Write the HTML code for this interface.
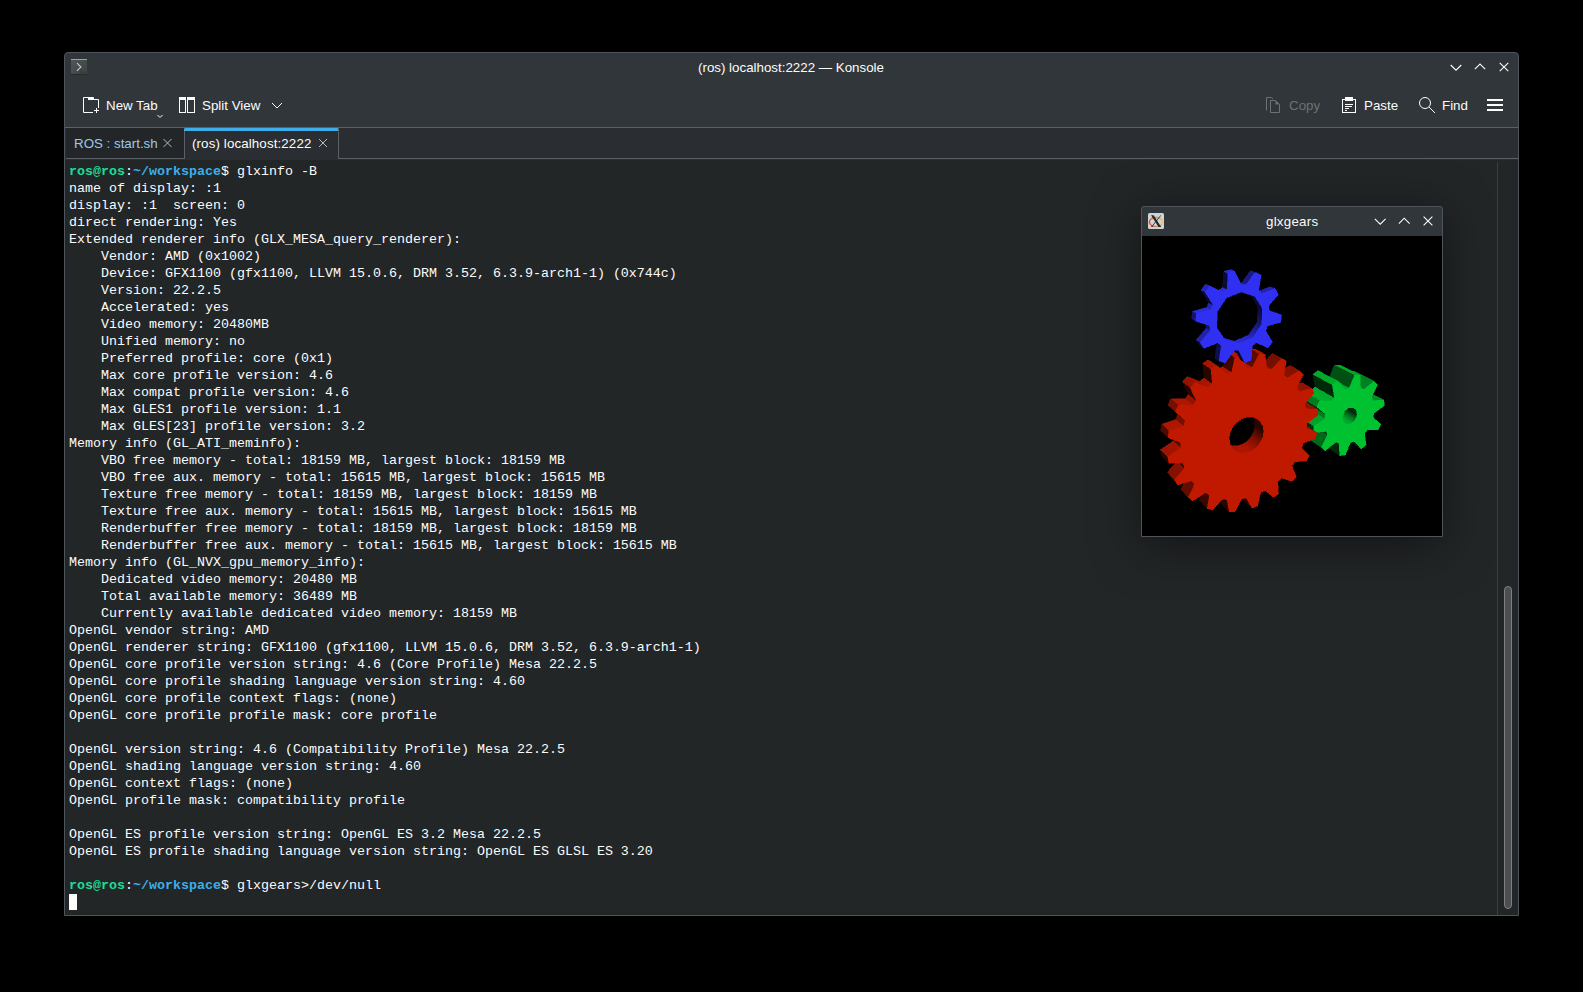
<!DOCTYPE html>
<html><head><meta charset="utf-8"><style>
*{margin:0;padding:0;box-sizing:border-box}
html,body{width:1583px;height:992px;overflow:hidden;background:#000}
.a{position:absolute}
.ui{position:absolute;font-family:"Liberation Sans",sans-serif;font-size:13.33px;line-height:16px;color:#fcfcfc;white-space:nowrap}
#kon{position:absolute;left:64px;top:52px;width:1455px;height:864px;border:1px solid #4d545b;border-bottom-color:#4d545b;border-radius:4px 4px 0 0;background:#31363b;overflow:hidden}
#term{position:absolute;left:0px;top:107px;width:1453px;height:755px;background:#232627}
pre{position:absolute;left:4px;top:3px;font-family:"Liberation Mono",monospace;font-size:13.333px;line-height:17px;color:#fcfcfc}
b{font-weight:bold}
.g{color:#1cdc9a}
.bl{color:#3daee9}
</style></head><body>
<div id="kon">
  <!-- title bar -->
  <svg class="a" style="left:5px;top:5px" width="18" height="18" viewBox="0 0 18 18">
    <defs><linearGradient id="ti" x1="0" y1="0" x2="1" y2="1"><stop offset="0" stop-color="#4f5856"/><stop offset="1" stop-color="#394240"/></linearGradient></defs>
    <rect x="1" y="1" width="16" height="16" fill="url(#ti)"/>
    <rect x="1" y="1" width="16" height="1" fill="#9aa3a3"/>
    <rect x="1" y="16" width="16" height="1" fill="#23282a"/>
    <path d="M9 9 L17 17 H10 Z" fill="#2e3534" opacity="0.4"/><path d="M7 5.1 L10.9 9 L7 12.9" fill="none" stroke="#c8cccc" stroke-width="1.1"/>
  </svg>
  <div class="ui" style="left:633px;top:7px;">(ros) localhost:2222 — Konsole</div>
  <svg class="a" style="left:1379px;top:4px" width="70" height="20" viewBox="1444 57 70 20">
    <path d="M1450.7 65 L1456 70.2 L1461.3 65" fill="none" stroke="#fcfcfc" stroke-width="1.1"/>
    <path d="M1474.8 69.2 L1480 64 L1485.2 69.2" fill="none" stroke="#fcfcfc" stroke-width="1.1"/>
    <path d="M1499.7 62.8 L1508.3 71.2 M1508.3 62.8 L1499.7 71.2" fill="none" stroke="#fcfcfc" stroke-width="1.1"/>
  </svg>
  <!-- toolbar -->
  <svg class="a" style="left:0;top:0" width="1453" height="75" viewBox="65 53 1453 75">
    <!-- new tab icon -->
    <path d="M83.5 97.5 H93.5 V99.5 H98.5 V108" fill="none" stroke="#fcfcfc" stroke-width="1"/>
    <path d="M83.5 97.5 V112.5 H93" fill="none" stroke="#fcfcfc" stroke-width="1"/>
    <rect x="88" y="98" width="6" height="2" fill="#fcfcfc"/>
    <path d="M96.5 108 V113 M94 110.5 H99" fill="none" stroke="#fcfcfc" stroke-width="1"/>
    <path d="M157.5 115 L160 117.5 L162.5 115" fill="none" stroke="#fcfcfc" stroke-width="1"/>
    <!-- split view icon -->
    <rect x="179.5" y="97.5" width="6" height="15" fill="none" stroke="#fcfcfc" stroke-width="1"/>
    <rect x="187.5" y="97.5" width="7" height="15" fill="none" stroke="#fcfcfc" stroke-width="1"/>
    <rect x="180" y="98" width="5" height="2" fill="#fcfcfc"/>
    <rect x="188" y="98" width="6" height="2" fill="#fcfcfc"/>
    <path d="M272 103 L277 108 L282 103" fill="none" stroke="#fcfcfc" stroke-width="1"/>
    <!-- copy icon (disabled) -->
    <path d="M1266.5 110.5 V97.5 H1271.5 L1273 99" fill="none" stroke="#6e7175" stroke-width="1"/>
    <path d="M1270.5 112.5 V100.5 H1275.5 L1279.5 104.5 V112.5 Z" fill="none" stroke="#6e7175" stroke-width="1"/>
    <path d="M1275.5 100.5 V104.5 H1279.5" fill="#6e7175"/>
    <!-- paste icon -->
    <rect x="1342.5" y="99.5" width="13" height="13" fill="none" stroke="#fcfcfc" stroke-width="1"/>
    <rect x="1345" y="97" width="8" height="4" fill="#fcfcfc"/>
    <path d="M1345 104.5 H1353 M1345 106.5 H1352 M1345 108.5 H1349 M1345 110.5 H1347" fill="none" stroke="#fcfcfc" stroke-width="1"/>
    <!-- find icon -->
    <circle cx="1425" cy="103" r="5.5" fill="none" stroke="#fcfcfc" stroke-width="1"/>
    <path d="M1429 107 L1435 113" fill="none" stroke="#fcfcfc" stroke-width="1"/>
    <!-- hamburger -->
    <rect x="1487" y="99" width="16" height="2" fill="#fcfcfc"/>
    <rect x="1487" y="104" width="16" height="2" fill="#fcfcfc"/>
    <rect x="1487" y="109" width="16" height="2" fill="#fcfcfc"/>
  </svg>
  <div class="ui" style="left:41px;top:45px">New Tab</div>
  <div class="ui" style="left:137px;top:45px">Split View</div>
  <div class="ui" style="left:1224px;top:45px;color:#6e7175">Copy</div>
  <div class="ui" style="left:1299px;top:45px">Paste</div>
  <div class="ui" style="left:1377px;top:45px">Find</div>
  <!-- tab bar -->
  <div class="a" style="left:0;top:74px;width:1453px;height:1px;background:#5d6165"></div>
  <div class="a" style="left:0;top:75px;width:1453px;height:32px;background:#2a2e32"></div>
  <div class="a" style="left:1px;top:75px;width:119px;height:31px;background:#232629;border-right:1px solid #5d6165;border-bottom:1px solid #5d6165"></div>
  <div class="a" style="left:120px;top:78px;width:153px;height:1px;background:#282a2d"></div>
  <div class="a" style="left:119px;top:75px;width:155px;height:3px;background:#3daee9;border-radius:2px 2px 0 0"></div>
  <div class="a" style="left:273px;top:75px;width:1180px;height:31px;border-left:1px solid #5d6165;border-bottom:1px solid #5d6165"></div>
  <div class="ui" style="left:9px;top:83px;color:#9dc9e8">ROS : start.sh</div>
  <div class="ui" style="left:127px;top:83px;letter-spacing:0.12px">(ros) localhost:2222</div>
  <svg class="a" style="left:0;top:75px" width="300" height="31" viewBox="65 128 300 31">
    <path d="M163.5 139 L171.5 147 M171.5 139 L163.5 147" fill="none" stroke="#b8babc" stroke-width="1"/>
    <path d="M319 139 L327 147 M327 139 L319 147" fill="none" stroke="#b8babc" stroke-width="1"/>
  </svg>
  <!-- terminal -->
  <div id="term">
    <pre><b class="g">ros@ros</b>:<b class="bl">~/workspace</b>$ glxinfo -B
name of display: :1
display: :1  screen: 0
direct rendering: Yes
Extended renderer info (GLX_MESA_query_renderer):
    Vendor: AMD (0x1002)
    Device: GFX1100 (gfx1100, LLVM 15.0.6, DRM 3.52, 6.3.9-arch1-1) (0x744c)
    Version: 22.2.5
    Accelerated: yes
    Video memory: 20480MB
    Unified memory: no
    Preferred profile: core (0x1)
    Max core profile version: 4.6
    Max compat profile version: 4.6
    Max GLES1 profile version: 1.1
    Max GLES[23] profile version: 3.2
Memory info (GL_ATI_meminfo):
    VBO free memory - total: 18159 MB, largest block: 18159 MB
    VBO free aux. memory - total: 15615 MB, largest block: 15615 MB
    Texture free memory - total: 18159 MB, largest block: 18159 MB
    Texture free aux. memory - total: 15615 MB, largest block: 15615 MB
    Renderbuffer free memory - total: 18159 MB, largest block: 18159 MB
    Renderbuffer free aux. memory - total: 15615 MB, largest block: 15615 MB
Memory info (GL_NVX_gpu_memory_info):
    Dedicated video memory: 20480 MB
    Total available memory: 36489 MB
    Currently available dedicated video memory: 18159 MB
OpenGL vendor string: AMD
OpenGL renderer string: GFX1100 (gfx1100, LLVM 15.0.6, DRM 3.52, 6.3.9-arch1-1)
OpenGL core profile version string: 4.6 (Core Profile) Mesa 22.2.5
OpenGL core profile shading language version string: 4.60
OpenGL core profile context flags: (none)
OpenGL core profile profile mask: core profile

OpenGL version string: 4.6 (Compatibility Profile) Mesa 22.2.5
OpenGL shading language version string: 4.60
OpenGL context flags: (none)
OpenGL profile mask: compatibility profile

OpenGL ES profile version string: OpenGL ES 3.2 Mesa 22.2.5
OpenGL ES profile shading language version string: OpenGL ES GLSL ES 3.20

<b class="g">ros@ros</b>:<b class="bl">~/workspace</b>$ glxgears&gt;/dev/null</pre>
    <div class="a" style="left:4px;top:734px;width:8px;height:16px;background:#fcfcfc"></div>
    <div class="a" style="left:1432px;top:2px;width:1px;height:753px;background:#3a3e41"></div>
    <div class="a" style="left:1439px;top:426px;width:8px;height:323px;border:1px solid #7d7f81;border-radius:4px;background:#4d4e50"></div>
  </div>
</div>
<!-- glxgears window -->
<div class="a" style="left:1141px;top:206px;width:302px;height:331px;border:1px solid #4d545b;border-radius:3px 3px 0 0;background:#31363b;box-shadow:0 8px 48px rgba(0,0,0,0.5)">
  <svg class="a" style="left:6px;top:6px" width="16" height="16" viewBox="0 0 16 16">
    <defs><linearGradient id="xo" x1="0" y1="0" x2="1" y2="0"><stop offset="0" stop-color="#e2491a"/><stop offset="1" stop-color="#e9bd6a"/></linearGradient></defs>
    <rect x="0" y="0" width="16" height="16" rx="1.5" fill="#cdd3d6"/>
    <ellipse cx="8" cy="9" rx="6.6" ry="4.5" fill="none" stroke="url(#xo)" stroke-width="1.3"/>
    <path d="M12.8 2.4 L4.2 13.2" stroke="#333" stroke-width="0.9"/>
    <path d="M3 2.3 L5.6 2.3 L13 13.7 L10.4 13.7 Z" fill="#262626"/>
    <rect x="10" y="12.8" width="3" height="0.9" fill="#262626"/>
    <rect x="3" y="12.8" width="2.4" height="0.9" fill="#333"/>
  </svg>
  <div class="ui" style="left:124px;top:7px;letter-spacing:0.25px">glxgears</div>
  <svg class="a" style="left:0;top:1px" width="300" height="28" viewBox="1142 208 300 28">
    <path d="M1374.8 218.8 L1380.2 224.2 L1385.6 218.8" fill="none" stroke="#fcfcfc" stroke-width="1.1"/>
    <path d="M1398.9 223.6 L1404.2 218.2 L1409.6 223.6" fill="none" stroke="#fcfcfc" stroke-width="1.1"/>
    <path d="M1423.6 216.6 L1432.4 225.4 M1432.4 216.6 L1423.6 225.4" fill="none" stroke="#fcfcfc" stroke-width="1.1"/>
  </svg>
  <div class="a" style="left:0;top:29px;width:300px;height:300px;background:#000"><svg width="300" height="300" viewBox="0 0 300 300" style="display:block;background:#000" shape-rendering="crispEdges"><path d="M212.2 205.3L192.7 193.1L199.7 200.4L219.2 212.8Z" fill="#00290a" stroke="#00290a" stroke-width="0.5"/><path d="M241.9 164.0L221.4 153.3L210.7 154.0L231.0 164.7Z" fill="#009024" stroke="#009024" stroke-width="0.5"/><path d="M197.1 207.4L177.9 194.9L178.7 206.8L197.8 219.6Z" fill="#00290a" stroke="#00290a" stroke-width="0.5"/><linearGradient id="ig3" gradientUnits="userSpaceOnUse" x1="202.6" y1="177.9" x2="205.3" y2="173.3"><stop offset="0" stop-color="#007d1f"/><stop offset="1" stop-color="#002e0c"/></linearGradient><path d="M193.5 172.6L213.2 184.1L215.2 179.0L195.4 167.6Z" fill="url(#ig3)" stroke="url(#ig3)" stroke-width="0.5"/><linearGradient id="ig5" gradientUnits="userSpaceOnUse" x1="200.8" y1="182.7" x2="203.4" y2="178.4"><stop offset="0" stop-color="#00ab2b"/><stop offset="1" stop-color="#007d1f"/></linearGradient><path d="M189.5 176.0L209.1 187.7L213.2 184.1L193.5 172.6Z" fill="url(#ig5)" stroke="url(#ig5)" stroke-width="0.5"/><linearGradient id="ig7" gradientUnits="userSpaceOnUse" x1="202.6" y1="171.8" x2="204.5" y2="168.5"><stop offset="0" stop-color="#002e0c"/><stop offset="1" stop-color="#00290a"/></linearGradient><path d="M195.4 167.6L215.2 179.0L214.4 174.2L194.6 162.9Z" fill="url(#ig7)" stroke="url(#ig7)" stroke-width="0.5"/><linearGradient id="ig9" gradientUnits="userSpaceOnUse" x1="197.9" y1="184.2" x2="199.3" y2="181.8"><stop offset="0" stop-color="#00a82a"/><stop offset="1" stop-color="#00ab2b"/></linearGradient><path d="M185.0 176.5L204.5 188.2L209.1 187.7L189.5 176.0Z" fill="url(#ig9)" stroke="url(#ig9)" stroke-width="0.5"/><path d="M232.1 145.1L211.6 135.0L201.7 143.0L221.9 153.4Z" fill="#008120" stroke="#008120" stroke-width="0.5"/><linearGradient id="ig12" gradientUnits="userSpaceOnUse" x1="200.8" y1="166.5" x2="201.2" y2="165.9"><stop offset="0" stop-color="#00290a"/><stop offset="1" stop-color="#00290a"/></linearGradient><path d="M194.6 162.9L214.4 174.2L211.1 171.5L191.3 160.3Z" fill="url(#ig12)" stroke="url(#ig12)" stroke-width="0.5"/><path d="M221.9 153.4L201.7 143.0L198.4 141.6L218.6 152.1Z" fill="#00741d" stroke="#00741d" stroke-width="0.5"/><path d="M179.4 211.4L160.7 198.6L164.5 202.0L183.3 214.8Z" fill="#00290a" stroke="#00290a" stroke-width="0.5"/><path d="M185.7 198.9L166.7 186.6L160.7 198.6L179.4 211.4Z" fill="#00681a" stroke="#00681a" stroke-width="0.5"/><path d="M184.0 195.4L165.1 183.2L166.7 186.6L185.7 198.9Z" fill="#002e0c" stroke="#002e0c" stroke-width="0.5"/><path d="M218.0 139.1L197.8 129.1L192.4 129.0L212.6 139.1Z" fill="#00a82a" stroke="#00a82a" stroke-width="0.5"/><path d="M212.6 139.1L192.4 129.0L187.3 141.5L207.2 152.1Z" fill="#005014" stroke="#005014" stroke-width="0.5"/><path d="M207.2 152.1L187.3 141.5L183.4 142.8L203.2 153.5Z" fill="#00a82a" stroke="#00a82a" stroke-width="0.5"/><path d="M183.4 178.2L164.3 166.6L163.6 171.0L182.7 182.8Z" fill="#007d1f" stroke="#007d1f" stroke-width="0.5"/><path d="M192.4 161.6L172.9 150.5L170.0 154.1L189.4 165.3Z" fill="#00ab2b" stroke="#00ab2b" stroke-width="0.5"/><path d="M182.7 182.8L163.6 171.0L152.7 178.2L171.5 190.4Z" fill="#00a229" stroke="#00a229" stroke-width="0.5"/><path d="M171.5 190.4L152.7 178.2L153.5 184.1L172.2 196.5Z" fill="#002e0c" stroke="#002e0c" stroke-width="0.5"/><path d="M190.4 148.9L170.9 138.3L172.9 150.5L192.4 161.6Z" fill="#00290a" stroke="#00290a" stroke-width="0.5"/><path d="M174.8 171.0L155.8 159.5L164.3 166.6L183.4 178.2Z" fill="#00290a" stroke="#00290a" stroke-width="0.5"/><path d="M189.4 165.3L170.0 154.1L158.5 153.5L177.7 164.8Z" fill="#00ae2c" stroke="#00ae2c" stroke-width="0.5"/><path d="M195.7 145.0L176.0 134.6L170.9 138.3L190.4 148.9Z" fill="#00ab2b" stroke="#00ab2b" stroke-width="0.5"/><path d="M177.7 164.8L158.5 153.5L155.8 159.5L174.8 171.0Z" fill="#007d1f" stroke="#007d1f" stroke-width="0.5"/><path d="M213.2 184.1L225.4 193.8L231.1 181.4ZM213.2 184.1L231.1 181.4L232.0 177.1L215.2 179.0ZM225.4 193.8L236.0 194.0L238.7 188.1L231.1 181.4ZM215.2 179.0L232.0 177.1L231.0 164.7ZM215.2 179.0L231.0 164.7L229.5 161.2L214.4 174.2ZM232.0 177.1L242.3 169.8L241.9 164.0L231.0 164.7ZM214.4 174.2L229.5 161.2L221.9 153.4ZM214.4 174.2L221.9 153.4L218.6 152.1L211.1 171.5ZM229.5 161.2L235.7 148.9L232.1 145.1L221.9 153.4ZM211.1 171.5L218.6 152.1L207.2 152.1ZM211.1 171.5L207.2 152.1L203.2 153.5L206.4 172.0ZM218.6 152.1L218.0 139.1L212.6 139.1L207.2 152.1ZM206.4 172.0L203.2 153.5L192.4 161.6ZM206.4 172.0L192.4 161.6L189.4 165.3L202.3 175.5ZM203.2 153.5L195.7 145.0L190.4 148.9L192.4 161.6ZM202.3 175.5L189.4 165.3L183.4 178.2ZM202.3 175.5L183.4 178.2L182.7 182.8L200.3 180.7ZM189.4 165.3L177.7 164.8L174.8 171.0L183.4 178.2ZM200.3 180.7L182.7 182.8L184.0 195.4ZM200.3 180.7L184.0 195.4L185.7 198.9L201.1 185.6ZM182.7 182.8L171.5 190.4L172.2 196.5L184.0 195.4ZM201.1 185.6L185.7 198.9L193.7 206.2ZM201.1 185.6L193.7 206.2L197.1 207.4L204.5 188.2ZM185.7 198.9L179.4 211.4L183.3 214.8L193.7 206.2ZM204.5 188.2L197.1 207.4L208.4 206.8ZM204.5 188.2L208.4 206.8L212.2 205.3L209.1 187.7ZM197.1 207.4L197.8 219.6L203.2 219.3L208.4 206.8ZM209.1 187.7L212.2 205.3L222.6 197.4ZM209.1 187.7L222.6 197.4L225.4 193.8L213.2 184.1ZM212.2 205.3L219.2 212.8L224.1 209.0L222.6 197.4Z" fill="#00c130" stroke="#00c130" stroke-width="0.5"/><path d="M174.7 196.7L165.3 190.5L155.3 185.9L164.6 192.1Z" fill="#841000" stroke="#841000" stroke-width="0.5"/><path d="M175.6 173.5L166.0 167.7L154.5 166.9L163.9 172.8Z" fill="#8f1200" stroke="#8f1200" stroke-width="0.5"/><path d="M104.4 262.1L96.1 254.4L101.7 264.3L110.0 272.1Z" fill="#290500" stroke="#290500" stroke-width="0.5"/><path d="M169.7 152.2L160.2 146.7L148.0 149.9L157.4 155.5Z" fill="#901200" stroke="#901200" stroke-width="0.5"/><path d="M85.2 263.7L77.2 255.8L79.2 268.0L87.2 276.0Z" fill="#290500" stroke="#290500" stroke-width="0.5"/><linearGradient id="ig36" gradientUnits="userSpaceOnUse" x1="113.0" y1="202.5" x2="116.5" y2="198.0"><stop offset="0" stop-color="#750f00"/><stop offset="1" stop-color="#4f0a00"/></linearGradient><path d="M109.7 200.0L118.4 206.6L120.9 201.3L112.1 194.7Z" fill="url(#ig36)" stroke="url(#ig36)" stroke-width="0.5"/><linearGradient id="ig38" gradientUnits="userSpaceOnUse" x1="110.4" y1="207.9" x2="114.1" y2="203.3"><stop offset="0" stop-color="#941200"/><stop offset="1" stop-color="#750f00"/></linearGradient><path d="M106.0 204.5L114.6 211.3L118.4 206.6L109.7 200.0Z" fill="url(#ig38)" stroke="url(#ig38)" stroke-width="0.5"/><linearGradient id="ig40" gradientUnits="userSpaceOnUse" x1="114.4" y1="196.4" x2="117.4" y2="192.4"><stop offset="0" stop-color="#4f0a00"/><stop offset="1" stop-color="#290500"/></linearGradient><path d="M112.1 194.7L120.9 201.3L121.7 195.7L113.0 189.2Z" fill="url(#ig40)" stroke="url(#ig40)" stroke-width="0.5"/><linearGradient id="ig42" gradientUnits="userSpaceOnUse" x1="106.8" y1="212.3" x2="110.3" y2="207.9"><stop offset="0" stop-color="#a81500"/><stop offset="1" stop-color="#941200"/></linearGradient><path d="M101.4 207.9L109.9 214.7L114.6 211.3L106.0 204.5Z" fill="url(#ig42)" stroke="url(#ig42)" stroke-width="0.5"/><linearGradient id="ig44" gradientUnits="userSpaceOnUse" x1="114.4" y1="190.2" x2="116.6" y2="187.2"><stop offset="0" stop-color="#290500"/><stop offset="1" stop-color="#290500"/></linearGradient><path d="M113.0 189.2L121.7 195.7L121.0 190.4L112.2 184.0Z" fill="url(#ig44)" stroke="url(#ig44)" stroke-width="0.5"/><linearGradient id="ig46" gradientUnits="userSpaceOnUse" x1="102.6" y1="215.0" x2="105.6" y2="211.3"><stop offset="0" stop-color="#b01600"/><stop offset="1" stop-color="#a81500"/></linearGradient><path d="M96.2 209.8L104.6 216.7L109.9 214.7L101.4 207.9Z" fill="url(#ig46)" stroke="url(#ig46)" stroke-width="0.5"/><path d="M157.4 134.6L147.9 129.4L136.3 136.5L145.6 141.9Z" fill="#871100" stroke="#871100" stroke-width="0.5"/><linearGradient id="ig49" gradientUnits="userSpaceOnUse" x1="112.9" y1="184.5" x2="114.3" y2="182.7"><stop offset="0" stop-color="#290500"/><stop offset="1" stop-color="#290500"/></linearGradient><path d="M112.2 184.0L121.0 190.4L118.6 185.9L109.9 179.6Z" fill="url(#ig49)" stroke="url(#ig49)" stroke-width="0.5"/><linearGradient id="ig51" gradientUnits="userSpaceOnUse" x1="98.1" y1="216.0" x2="100.4" y2="213.2"><stop offset="0" stop-color="#ab1500"/><stop offset="1" stop-color="#b01600"/></linearGradient><path d="M90.9 210.0L99.3 216.9L104.6 216.7L96.2 209.8Z" fill="url(#ig51)" stroke="url(#ig51)" stroke-width="0.5"/><linearGradient id="ig53" gradientUnits="userSpaceOnUse" x1="110.3" y1="179.9" x2="110.5" y2="179.5"><stop offset="0" stop-color="#290500"/><stop offset="1" stop-color="#290500"/></linearGradient><path d="M109.9 179.6L118.6 185.9L114.9 182.6L106.2 176.4Z" fill="url(#ig53)" stroke="url(#ig53)" stroke-width="0.5"/><linearGradient id="ig55" gradientUnits="userSpaceOnUse" x1="93.9" y1="214.9" x2="95.1" y2="213.5"><stop offset="0" stop-color="#991300"/><stop offset="1" stop-color="#ab1500"/></linearGradient><path d="M86.2 208.5L94.5 215.4L99.3 216.9L90.9 210.0Z" fill="url(#ig55)" stroke="url(#ig55)" stroke-width="0.5"/><path d="M67.4 259.0L59.6 251.1L57.6 264.4L65.3 272.5Z" fill="#3b0700" stroke="#3b0700" stroke-width="0.5"/><linearGradient id="ig58" gradientUnits="userSpaceOnUse" x1="90.3" y1="212.0" x2="90.3" y2="212.0"><stop offset="0" stop-color="#7c0f00"/><stop offset="1" stop-color="#991300"/></linearGradient><path d="M82.3 205.4L90.6 212.3L94.5 215.4L86.2 208.5Z" fill="url(#ig58)" stroke="url(#ig58)" stroke-width="0.5"/><path d="M144.4 125.0L135.0 119.9L130.1 117.6L139.4 122.7Z" fill="#991300" stroke="#991300" stroke-width="0.5"/><path d="M139.4 122.7L130.1 117.6L120.2 128.2L129.4 133.5Z" fill="#750f00" stroke="#750f00" stroke-width="0.5"/><path d="M129.4 133.5L120.2 128.2L115.7 127.0L124.8 132.4Z" fill="#991300" stroke="#991300" stroke-width="0.5"/><path d="M52.6 248.1L45.0 240.4L38.9 253.6L46.4 261.6Z" fill="#640c00" stroke="#640c00" stroke-width="0.5"/><path d="M49.6 244.6L42.0 236.9L45.0 240.4L52.6 248.1Z" fill="#290500" stroke="#290500" stroke-width="0.5"/><path d="M123.0 118.4L113.9 113.3L108.1 112.9L117.1 118.0Z" fill="#ab1500" stroke="#ab1500" stroke-width="0.5"/><path d="M117.1 118.0L108.1 112.9L101.2 126.1L110.1 131.4Z" fill="#5b0b00" stroke="#5b0b00" stroke-width="0.5"/><path d="M110.1 131.4L101.2 126.1L96.2 126.6L105.0 132.0Z" fill="#ab1500" stroke="#ab1500" stroke-width="0.5"/><path d="M32.6 243.9L25.3 236.1L28.1 241.0L35.5 248.9Z" fill="#290500" stroke="#290500" stroke-width="0.5"/><path d="M42.6 232.0L35.1 224.5L25.3 236.1L32.6 243.9Z" fill="#861100" stroke="#861100" stroke-width="0.5"/><path d="M41.0 227.3L33.5 219.8L35.1 224.5L42.6 232.0Z" fill="#290500" stroke="#290500" stroke-width="0.5"/><path d="M89.7 136.2L81.1 130.7L76.2 132.8L84.6 138.4Z" fill="#b01600" stroke="#b01600" stroke-width="0.5"/><path d="M92.8 121.4L84.1 116.1L81.1 130.7L89.7 136.2Z" fill="#3d0800" stroke="#3d0800" stroke-width="0.5"/><path d="M98.9 119.7L90.2 114.6L84.1 116.1L92.8 121.4Z" fill="#b01600" stroke="#b01600" stroke-width="0.5"/><path d="M38.8 206.6L31.3 199.6L31.2 204.8L38.7 212.0Z" fill="#4f0a00" stroke="#4f0a00" stroke-width="0.5"/><path d="M38.7 212.0L31.2 204.8L18.5 213.5L25.8 220.9Z" fill="#a01400" stroke="#a01400" stroke-width="0.5"/><path d="M25.8 220.9L18.5 213.5L19.5 219.5L26.8 227.1Z" fill="#290500" stroke="#290500" stroke-width="0.5"/><path d="M70.3 147.5L62.1 141.7L57.8 145.4L65.9 151.3Z" fill="#a81500" stroke="#a81500" stroke-width="0.5"/><path d="M43.3 184.9L35.7 178.2L33.9 183.5L41.6 190.3Z" fill="#750f00" stroke="#750f00" stroke-width="0.5"/><path d="M68.9 133.0L60.6 127.4L62.1 141.7L70.3 147.5Z" fill="#290500" stroke="#290500" stroke-width="0.5"/><path d="M54.2 164.4L46.3 158.1L43.1 162.9L51.0 169.2Z" fill="#941200" stroke="#941200" stroke-width="0.5"/><path d="M74.7 129.3L66.3 123.9L60.6 127.4L68.9 133.0Z" fill="#a81500" stroke="#a81500" stroke-width="0.5"/><path d="M41.6 190.3L33.9 183.5L19.7 188.1L27.0 195.1Z" fill="#ae1600" stroke="#ae1600" stroke-width="0.5"/><path d="M65.9 151.3L57.8 145.4L45.0 140.5L52.9 146.4Z" fill="#a31400" stroke="#a31400" stroke-width="0.5"/><path d="M33.3 175.5L25.8 169.0L35.7 178.2L43.3 184.9Z" fill="#290500" stroke="#290500" stroke-width="0.5"/><path d="M48.2 151.7L40.4 145.7L46.3 158.1L54.2 164.4Z" fill="#290500" stroke="#290500" stroke-width="0.5"/><path d="M27.0 195.1L19.7 188.1L18.6 194.6L26.0 201.7Z" fill="#4f0a00" stroke="#4f0a00" stroke-width="0.5"/><path d="M51.0 169.2L43.1 162.9L28.8 162.8L36.4 169.2Z" fill="#af1600" stroke="#af1600" stroke-width="0.5"/><path d="M52.9 146.4L45.0 140.5L40.4 145.7L48.2 151.7Z" fill="#941200" stroke="#941200" stroke-width="0.5"/><path d="M36.4 169.2L28.8 162.8L25.8 169.0L33.3 175.5Z" fill="#750f00" stroke="#750f00" stroke-width="0.5"/><path d="M121.0 190.4L162.8 168.2L157.4 155.5ZM121.0 190.4L157.4 155.5L154.9 151.7L118.6 185.9ZM162.8 168.2L171.8 157.2L169.7 152.2L157.4 155.5ZM118.6 185.9L154.9 151.7L145.6 141.9ZM118.6 185.9L145.6 141.9L141.9 139.3L114.9 182.6ZM154.9 151.7L161.1 138.5L157.4 134.6L145.6 141.9ZM114.9 182.6L141.9 139.3L129.4 133.5ZM114.9 182.6L129.4 133.5L124.8 132.4L110.1 181.0ZM141.9 139.3L144.4 125.0L139.4 122.7L129.4 133.5ZM110.1 181.0L124.8 132.4L110.1 131.4ZM110.1 181.0L110.1 131.4L105.0 132.0L104.8 181.1ZM124.8 132.4L123.0 118.4L117.1 118.0L110.1 131.4ZM104.8 181.1L105.0 132.0L89.7 136.2ZM104.8 181.1L89.7 136.2L84.6 138.4L99.4 182.9ZM105.0 132.0L98.9 119.7L92.8 121.4L89.7 136.2ZM99.4 182.9L84.6 138.4L70.3 147.5ZM99.4 182.9L70.3 147.5L65.9 151.3L94.5 186.4ZM84.6 138.4L74.7 129.3L68.9 133.0L70.3 147.5ZM94.5 186.4L65.9 151.3L54.2 164.4ZM94.5 186.4L54.2 164.4L51.0 169.2L90.6 191.2ZM65.9 151.3L52.9 146.4L48.2 151.7L54.2 164.4ZM90.6 191.2L51.0 169.2L43.3 184.9ZM90.6 191.2L43.3 184.9L41.6 190.3L88.1 196.7ZM51.0 169.2L36.4 169.2L33.3 175.5L43.3 184.9ZM88.1 196.7L41.6 190.3L38.8 206.6ZM88.1 196.7L38.8 206.6L38.7 212.0L87.2 202.5ZM41.6 190.3L27.0 195.1L26.0 201.7L38.8 206.6ZM87.2 202.5L38.7 212.0L41.0 227.3ZM87.2 202.5L41.0 227.3L42.6 232.0L88.1 207.8ZM38.7 212.0L25.8 220.9L26.8 227.1L41.0 227.3ZM88.1 207.8L42.6 232.0L49.6 244.6ZM88.1 207.8L49.6 244.6L52.6 248.1L90.6 212.3ZM42.6 232.0L32.6 243.9L35.5 248.9L49.6 244.6ZM90.6 212.3L52.6 248.1L63.3 256.8ZM90.6 212.3L63.3 256.8L67.4 259.0L94.5 215.4ZM52.6 248.1L46.4 261.6L50.7 265.0L63.3 256.8ZM94.5 215.4L67.4 259.0L80.6 263.1ZM94.5 215.4L80.6 263.1L85.2 263.7L99.3 216.9ZM67.4 259.0L65.3 272.5L70.6 274.1L80.6 263.1ZM99.3 216.9L85.2 263.7L99.6 263.0ZM99.3 216.9L99.6 263.0L104.4 262.1L104.6 216.7ZM85.2 263.7L87.2 276.0L92.9 275.7L99.6 263.0ZM104.6 216.7L104.4 262.1L118.5 257.0ZM104.6 216.7L118.5 257.0L123.1 254.6L109.9 214.7ZM104.4 262.1L110.0 272.1L115.6 270.0L118.5 257.0ZM109.9 214.7L123.1 254.6L135.8 245.6ZM109.9 214.7L135.8 245.6L139.7 242.1L114.6 211.3ZM123.1 254.6L131.6 261.5L136.6 257.9L135.8 245.6ZM114.6 211.3L139.7 242.1L150.0 230.1ZM114.6 211.3L150.0 230.1L152.9 225.7L118.4 206.6ZM139.7 242.1L150.3 245.4L154.4 240.7L150.0 230.1ZM118.4 206.6L152.9 225.7L159.8 211.8ZM118.4 206.6L159.8 211.8L161.5 206.9L120.9 201.3ZM152.9 225.7L164.6 225.2L167.4 219.7L159.8 211.8ZM120.9 201.3L161.5 206.9L164.6 192.1ZM120.9 201.3L164.6 192.1L165.0 187.2L121.7 195.7ZM161.5 206.9L173.4 202.5L174.7 196.7L164.6 192.1ZM121.7 195.7L165.0 187.2L163.9 172.8ZM121.7 195.7L163.9 172.8L162.8 168.2L121.0 190.4ZM165.0 187.2L176.0 179.2L175.6 173.5L163.9 172.8Z" fill="#c11800" stroke="#c11800" stroke-width="0.5"/><path d="M139.6 79.1L134.8 77.0L122.7 72.9L127.3 75.0Z" fill="#2323ad" stroke="#2323ad" stroke-width="0.5"/><linearGradient id="ig92" gradientUnits="userSpaceOnUse" x1="110.1" y1="101.1" x2="117.5" y2="87.2"><stop offset="0" stop-color="#2626bd"/><stop offset="1" stop-color="#151568"/></linearGradient><path d="M106.4 99.2L110.9 101.6L119.8 88.3L115.2 86.1Z" fill="url(#ig92)" stroke="url(#ig92)" stroke-width="0.5"/><path d="M96.8 114.4L92.4 111.8L98.5 123.9L102.9 126.6Z" fill="#0a0a33" stroke="#0a0a33" stroke-width="0.5"/><linearGradient id="ig95" gradientUnits="userSpaceOnUse" x1="111.9" y1="84.4" x2="118.2" y2="71.6"><stop offset="0" stop-color="#151568"/><stop offset="1" stop-color="#0a0a33"/></linearGradient><path d="M115.2 86.1L119.8 88.3L120.5 72.6L115.9 70.5Z" fill="url(#ig95)" stroke="url(#ig95)" stroke-width="0.5"/><linearGradient id="ig97" gradientUnits="userSpaceOnUse" x1="102.8" y1="110.8" x2="108.7" y2="100.4"><stop offset="0" stop-color="#2c2cdc"/><stop offset="1" stop-color="#2626bd"/></linearGradient><path d="M92.6 105.1L97.0 107.6L110.9 101.6L106.4 99.2Z" fill="url(#ig97)" stroke="url(#ig97)" stroke-width="0.5"/><path d="M133.2 52.6L128.4 50.7L115.3 55.6L120.0 57.5Z" fill="#2323b0" stroke="#2323b0" stroke-width="0.5"/><linearGradient id="ig100" gradientUnits="userSpaceOnUse" x1="107.1" y1="66.5" x2="110.4" y2="59.2"><stop offset="0" stop-color="#0a0a33"/><stop offset="1" stop-color="#0a0a33"/></linearGradient><path d="M115.9 70.5L120.5 72.6L112.7 60.2L108.1 58.2Z" fill="url(#ig100)" stroke="url(#ig100)" stroke-width="0.5"/><linearGradient id="ig102" gradientUnits="userSpaceOnUse" x1="93.0" y1="109.6" x2="94.8" y2="106.4"><stop offset="0" stop-color="#2525bb"/><stop offset="1" stop-color="#2c2cdc"/></linearGradient><path d="M78.9 101.5L83.2 104.0L97.0 107.6L92.6 105.1Z" fill="url(#ig102)" stroke="url(#ig102)" stroke-width="0.5"/><path d="M79.3 109.9L75.0 107.3L72.8 122.2L77.0 124.9Z" fill="#0f0f4a" stroke="#0f0f4a" stroke-width="0.5"/><path d="M75.7 106.9L71.5 104.4L75.0 107.3L79.3 109.9Z" fill="#0a0a33" stroke="#0a0a33" stroke-width="0.5"/><path d="M113.0 36.3L108.3 34.6L99.4 47.1L103.9 49.0Z" fill="#1a1a83" stroke="#1a1a83" stroke-width="0.5"/><path d="M103.9 49.0L99.4 47.1L94.7 46.9L99.2 48.8Z" fill="#2525bb" stroke="#2525bb" stroke-width="0.5"/><path d="M58.2 106.4L54.1 103.9L57.7 109.8L61.8 112.4Z" fill="#0a0a33" stroke="#0a0a33" stroke-width="0.5"/><path d="M68.5 94.4L64.3 92.0L54.1 103.9L58.2 106.4Z" fill="#2222a8" stroke="#2222a8" stroke-width="0.5"/><path d="M67.4 89.5L63.2 87.1L64.3 92.0L68.5 94.4Z" fill="#151568" stroke="#151568" stroke-width="0.5"/><path d="M85.1 53.2L80.7 51.2L76.5 54.2L80.8 56.2Z" fill="#2c2cdc" stroke="#2c2cdc" stroke-width="0.5"/><path d="M86.0 37.4L81.6 35.6L80.7 51.2L85.1 53.2Z" fill="#0b0b38" stroke="#0b0b38" stroke-width="0.5"/><path d="M71.0 68.8L66.7 66.6L64.7 71.6L69.0 73.8Z" fill="#2626bd" stroke="#2626bd" stroke-width="0.5"/><path d="M92.8 35.3L88.3 33.5L81.6 35.6L86.0 37.4Z" fill="#2c2cdc" stroke="#2c2cdc" stroke-width="0.5"/><path d="M69.0 73.8L64.7 71.6L50.3 75.4L54.4 77.6Z" fill="#2c2cda" stroke="#2c2cda" stroke-width="0.5"/><path d="M63.0 56.2L58.8 54.1L66.7 66.6L71.0 68.8Z" fill="#0a0a33" stroke="#0a0a33" stroke-width="0.5"/><path d="M54.4 77.6L50.3 75.4L49.6 82.9L53.7 85.2Z" fill="#151568" stroke="#151568" stroke-width="0.5"/><path d="M67.8 50.1L63.5 48.1L58.8 54.1L63.0 56.2Z" fill="#2626bd" stroke="#2626bd" stroke-width="0.5"/><path d="M110.9 101.6L114.3 106.7L123.6 94.7ZM110.9 101.6L123.6 94.7L125.6 90.0L119.8 88.3ZM114.3 106.7L126.1 111.8L130.5 106.1L123.6 94.7ZM119.8 88.3L125.6 90.0L127.3 75.0ZM119.8 88.3L127.3 75.0L126.5 70.1L120.5 72.6ZM125.6 90.0L138.7 86.2L139.6 79.1L127.3 75.0ZM120.5 72.6L126.5 70.1L120.0 57.5ZM120.5 72.6L120.0 57.5L116.6 54.4L112.7 60.2ZM126.5 70.1L136.3 58.6L133.2 52.6L120.0 57.5ZM112.7 60.2L116.6 54.4L103.9 49.0ZM112.7 60.2L103.9 49.0L99.2 48.8L98.9 56.0ZM116.6 54.4L119.1 39.0L113.0 36.3L103.9 49.0ZM98.9 56.0L99.2 48.8L85.1 53.2ZM98.9 56.0L85.1 53.2L80.8 56.2L84.5 61.8ZM99.2 48.8L92.8 35.3L86.0 37.4L85.1 53.2ZM84.5 61.8L80.8 56.2L71.0 68.8ZM84.5 61.8L71.0 68.8L69.0 73.8L75.3 75.6ZM80.8 56.2L67.8 50.1L63.0 56.2L71.0 68.8ZM75.3 75.6L69.0 73.8L67.4 89.5ZM75.3 75.6L67.4 89.5L68.5 94.4L74.8 91.8ZM69.0 73.8L54.4 77.6L53.7 85.2L67.4 89.5ZM74.8 91.8L68.5 94.4L75.7 106.9ZM74.8 91.8L75.7 106.9L79.3 109.9L83.2 104.0ZM68.5 94.4L58.2 106.4L61.8 112.4L75.7 106.9ZM83.2 104.0L79.3 109.9L92.1 114.4ZM83.2 104.0L92.1 114.4L96.8 114.4L97.0 107.6ZM79.3 109.9L77.0 124.9L83.2 127.0L92.1 114.4ZM97.0 107.6L96.8 114.4L110.3 109.7ZM97.0 107.6L110.3 109.7L114.3 106.7L110.9 101.6ZM96.8 114.4L102.9 126.6L109.3 124.3L110.3 109.7Z" fill="#3030f2" stroke="#3030f2" stroke-width="0.5"/></svg></div>
</div>
</body></html>
